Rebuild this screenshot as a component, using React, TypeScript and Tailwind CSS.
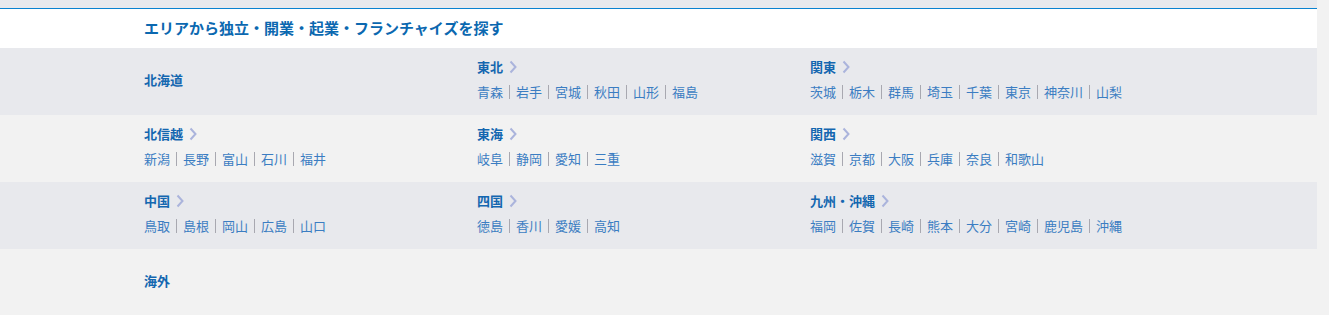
import React from "react";

type Region = { name: string; prefs?: string[]; link?: boolean };

const rows: Region[][] = [
  [
    { name: "北海道" },
    { name: "東北", link: true, prefs: ["青森", "岩手", "宮城", "秋田", "山形", "福島"] },
    { name: "関東", link: true, prefs: ["茨城", "栃木", "群馬", "埼玉", "千葉", "東京", "神奈川", "山梨"] },
  ],
  [
    { name: "北信越", link: true, prefs: ["新潟", "長野", "富山", "石川", "福井"] },
    { name: "東海", link: true, prefs: ["岐阜", "静岡", "愛知", "三重"] },
    { name: "関西", link: true, prefs: ["滋賀", "京都", "大阪", "兵庫", "奈良", "和歌山"] },
  ],
  [
    { name: "中国", link: true, prefs: ["鳥取", "島根", "岡山", "広島", "山口"] },
    { name: "四国", link: true, prefs: ["徳島", "香川", "愛媛", "高知"] },
    { name: "九州・沖縄", link: true, prefs: ["福岡", "佐賀", "長崎", "熊本", "大分", "宮崎", "鹿児島", "沖縄"] },
  ],
  [{ name: "海外" }],
];

function Chevron() {
  return (
    <svg width="8" height="14" viewBox="0 0 8 14" className="ml-[6px] shrink-0">
      <path d="M1.5 1.5 L6.5 7 L1.5 12.5" fill="none" stroke="#abb4dc" strokeWidth="2" />
    </svg>
  );
}

function Cell({ r }: { r: Region }) {
  if (!r.prefs) {
    return (
      <div className="self-center">
        <div className="text-[13px] font-bold leading-[20px] text-[#1467b0]">{r.name}</div>
      </div>
    );
  }
  return (
    <div>
      <div className="flex items-center text-[13px] font-bold leading-[20px] text-[#1467b0]">
        {r.name}
        <Chevron />
      </div>
      <div className="mt-[5px] flex items-center text-[13px] leading-[20px] text-[#3b7dc2]">
        {r.prefs.map((p, i) => (
          <React.Fragment key={p}>
            {i > 0 && <span className="mx-[6px] inline-block h-[14px] w-px bg-[#a8a8b0]" />}
            <span>{p}</span>
          </React.Fragment>
        ))}
      </div>
    </div>
  );
}

export default function App() {
  return (
    <div
      className="min-h-[315px] w-[1329px] bg-[#f2f2f2]"
      style={{ fontFamily: '"Noto Sans CJK JP", "Noto Sans", sans-serif' }}
    >
      <div className="w-[1317px]">
        <div className="h-[8px] bg-[#e8e9ed]" />
        <div className="h-px bg-[#0a82d0]" />
        <div className="flex h-[39px] items-center bg-white pl-[144px] text-[15px] font-bold text-[#0b68b0]">
          エリアから独立・開業・起業・フランチャイズを探す
        </div>
        {rows.map((row, i) => (
          <div
            key={i}
            className={`grid h-[67px] grid-cols-[333px_333px_333px] pl-[144px] pt-[9px] pb-[13px] ${
              i % 2 === 0 ? "bg-[#e8e9ed]" : "bg-[#f2f2f2]"
            }`}
          >
            {row.map((r) => (
              <Cell key={r.name} r={r} />
            ))}
          </div>
        ))}
      </div>
    </div>
  );
}
